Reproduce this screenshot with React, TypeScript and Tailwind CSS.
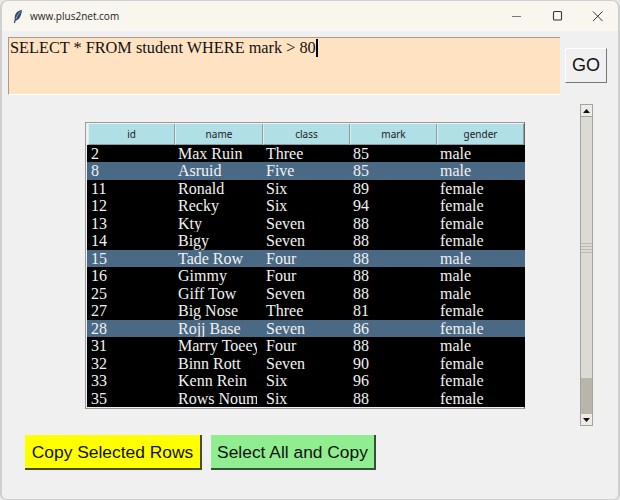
const rows: [string, string, string, string, string, boolean][] = [
  ["2", "Max Ruin", "Three", "85", "male", false],
  ["8", "Asruid", "Five", "85", "male", true],
  ["11", "Ronald", "Six", "89", "female", false],
  ["12", "Recky", "Six", "94", "female", false],
  ["13", "Kty", "Seven", "88", "female", false],
  ["14", "Bigy", "Seven", "88", "female", false],
  ["15", "Tade Row", "Four", "88", "male", true],
  ["16", "Gimmy", "Four", "88", "male", false],
  ["25", "Giff Tow", "Seven", "88", "male", false],
  ["27", "Big Nose", "Three", "81", "female", false],
  ["28", "Rojj Base", "Seven", "86", "female", true],
  ["31", "Marry Toeey", "Four", "88", "male", false],
  ["32", "Binn Rott", "Seven", "90", "female", false],
  ["33", "Kenn Rein", "Six", "96", "female", false],
  ["35", "Rows Noum", "Six", "88", "female", false],
];

const heads = ["id", "name", "class", "mark", "gender"];

export default function App() {
  return (
    <div className="w-[620px] h-[500px] bg-[#e9e9e9] font-['Liberation_Sans',sans-serif]">
      <div className="w-full h-full bg-[#f0f0f0] rounded-t-lg rounded-b-md border-l-2 border-t border-r-2 border-b border-[#cfcfcf] flex flex-col overflow-hidden">
        <div className="h-[30px] shrink-0 bg-[#f9f5ef] flex items-center pl-[11px] pr-0">
          <svg width="10" height="15" viewBox="0 0 10 14" className="shrink-0">
            <path d="M9 0.4 C5.2 0.8 2.4 3.4 1.8 7 L1.6 10.2 L0.8 13.6 L2 13.6 L2.8 11 C6 10.4 8.2 6.8 9 0.4 Z" fill="#2f4a68" />
            <path d="M7.4 2.4 C5.4 4 4 6.6 3 9.6" stroke="#c9d6e4" strokeWidth="0.7" fill="none" />
          </svg>
          <span className="ml-[7px] text-[10px] leading-none text-[#222] font-['Open_Sans',sans-serif]">www.plus2net.com</span>
          <div className="ml-auto flex items-center">
            <svg width="40" height="14" viewBox="0 0 40 14"><path d="M14 7.5H23" stroke="#777" strokeWidth="1.2" /></svg>
            <svg width="40" height="14" viewBox="0 0 40 14"><rect x="15.5" y="2.5" width="8" height="8.5" rx="1" fill="none" stroke="#333" strokeWidth="1.1" /></svg>
            <svg width="40" height="14" viewBox="0 0 40 14"><path d="M15 2.5L24.5 12M24.5 2.5L15 12" stroke="#333" strokeWidth="1" /></svg>
          </div>
        </div>

        <div className="flex items-start pl-[6px] pt-[6px]">
          <div className="w-[552px] h-[58px] bg-[#ffe2c2] border-t border-l border-[#a89c8e] border-r-[#fff] border-b border-b-[#fff] pl-[1px] pt-[1px] font-['Liberation_Serif',serif] text-[16.3px] leading-[18px] text-[#111] flex items-start">
            <span>SELECT * FROM student WHERE mark &gt; 80</span>
            <span className="w-[2px] h-[18px] bg-black" />
          </div>
          <div className="ml-[5px] mt-[11px] w-[42px] h-[35px] bg-[#f0f0f0] border border-t-[#fff] border-l-[#fff] border-r-[#777] border-b-[#777] flex items-center justify-center text-[18px] text-[#111]">
            GO
          </div>
        </div>

        <div className="flex items-start mt-[9px]">
          <div className="ml-[83px] mt-[18px] w-[440px] h-[287px] border border-[#9a9a9a] border-r-[#666] pl-[1px] pt-[1px] pb-[1px] flex flex-col">
            <div className="grid grid-cols-[87px_88px_87px_87px_87px] h-[21px] shrink-0 pl-[1px]">
              {heads.map((h) => (
                <div key={h} className="bg-[#b0e0e6] border-r border-b border-[#8f9a9c] border-l border-l-[#d8f0f3] flex items-center justify-center text-[10px] text-[#222] font-['Noto_Sans',sans-serif]">
                  {h}
                </div>
              ))}
            </div>
            <div className="bg-black flex-1 w-[438px] font-['Liberation_Serif',serif] text-[16px] text-[#f2f2f2]">
              {rows.map((r) => (
                <div key={r[0]} className={`grid grid-cols-[87px_88px_87px_87px_87px] h-[17.47px] leading-[18px] pl-[1px] ${r[5] ? "bg-[#4a6984]" : "bg-black"}`}>
                  {r.slice(0, 5).map((c, i) => (
                    <div key={i} className="pl-[3px] w-[82px] overflow-hidden whitespace-nowrap">{c as string}</div>
                  ))}
                </div>
              ))}
            </div>
          </div>

          <div className="ml-[55px] w-[13px] h-[322px] bg-[#dcdad5] border border-[#a5a39e] flex flex-col">
            <div className="h-[12px] shrink-0 bg-[#ecebe8] border-b border-[#a5a39e] flex items-center justify-center">
              <svg width="7" height="4" viewBox="0 0 7 4"><path d="M3.5 0L7 4H0Z" fill="#111" /></svg>
            </div>
            <div className="h-[126px] shrink-0" />
            <div className="flex flex-col gap-[2px] items-stretch">
              <div className="h-[1px] bg-[#bcbab5]" />
              <div className="h-[1px] bg-[#bcbab5]" />
              <div className="h-[1px] bg-[#bcbab5]" />
              <div className="h-[1px] bg-[#bcbab5]" />
            </div>
            <div className="flex-1" />
            <div className="h-[36px] shrink-0 bg-[#bab5ab]" />
            <div className="h-[11px] shrink-0 bg-[#ecebe8] flex items-center justify-center">
              <svg width="7" height="4" viewBox="0 0 7 4"><path d="M0 0H7L3.5 4Z" fill="#111" /></svg>
            </div>
          </div>
        </div>

        <div className="flex gap-[9px] ml-[23px] mt-[9px]">
          <div className="w-[177px] h-[35px] bg-[#ffff00] border-r-2 border-b-2 border-[#4a4a20] flex items-center justify-center pt-[1px] text-[17.4px] text-[#111]">
            Copy Selected Rows
          </div>
          <div className="w-[165px] h-[35px] bg-[#90ee90] border-r-2 border-b-2 border-[#35503a] flex items-center justify-center pt-[1px] text-[17.4px] text-[#111]">
            Select All and Copy
          </div>
        </div>
      </div>
    </div>
  );
}
